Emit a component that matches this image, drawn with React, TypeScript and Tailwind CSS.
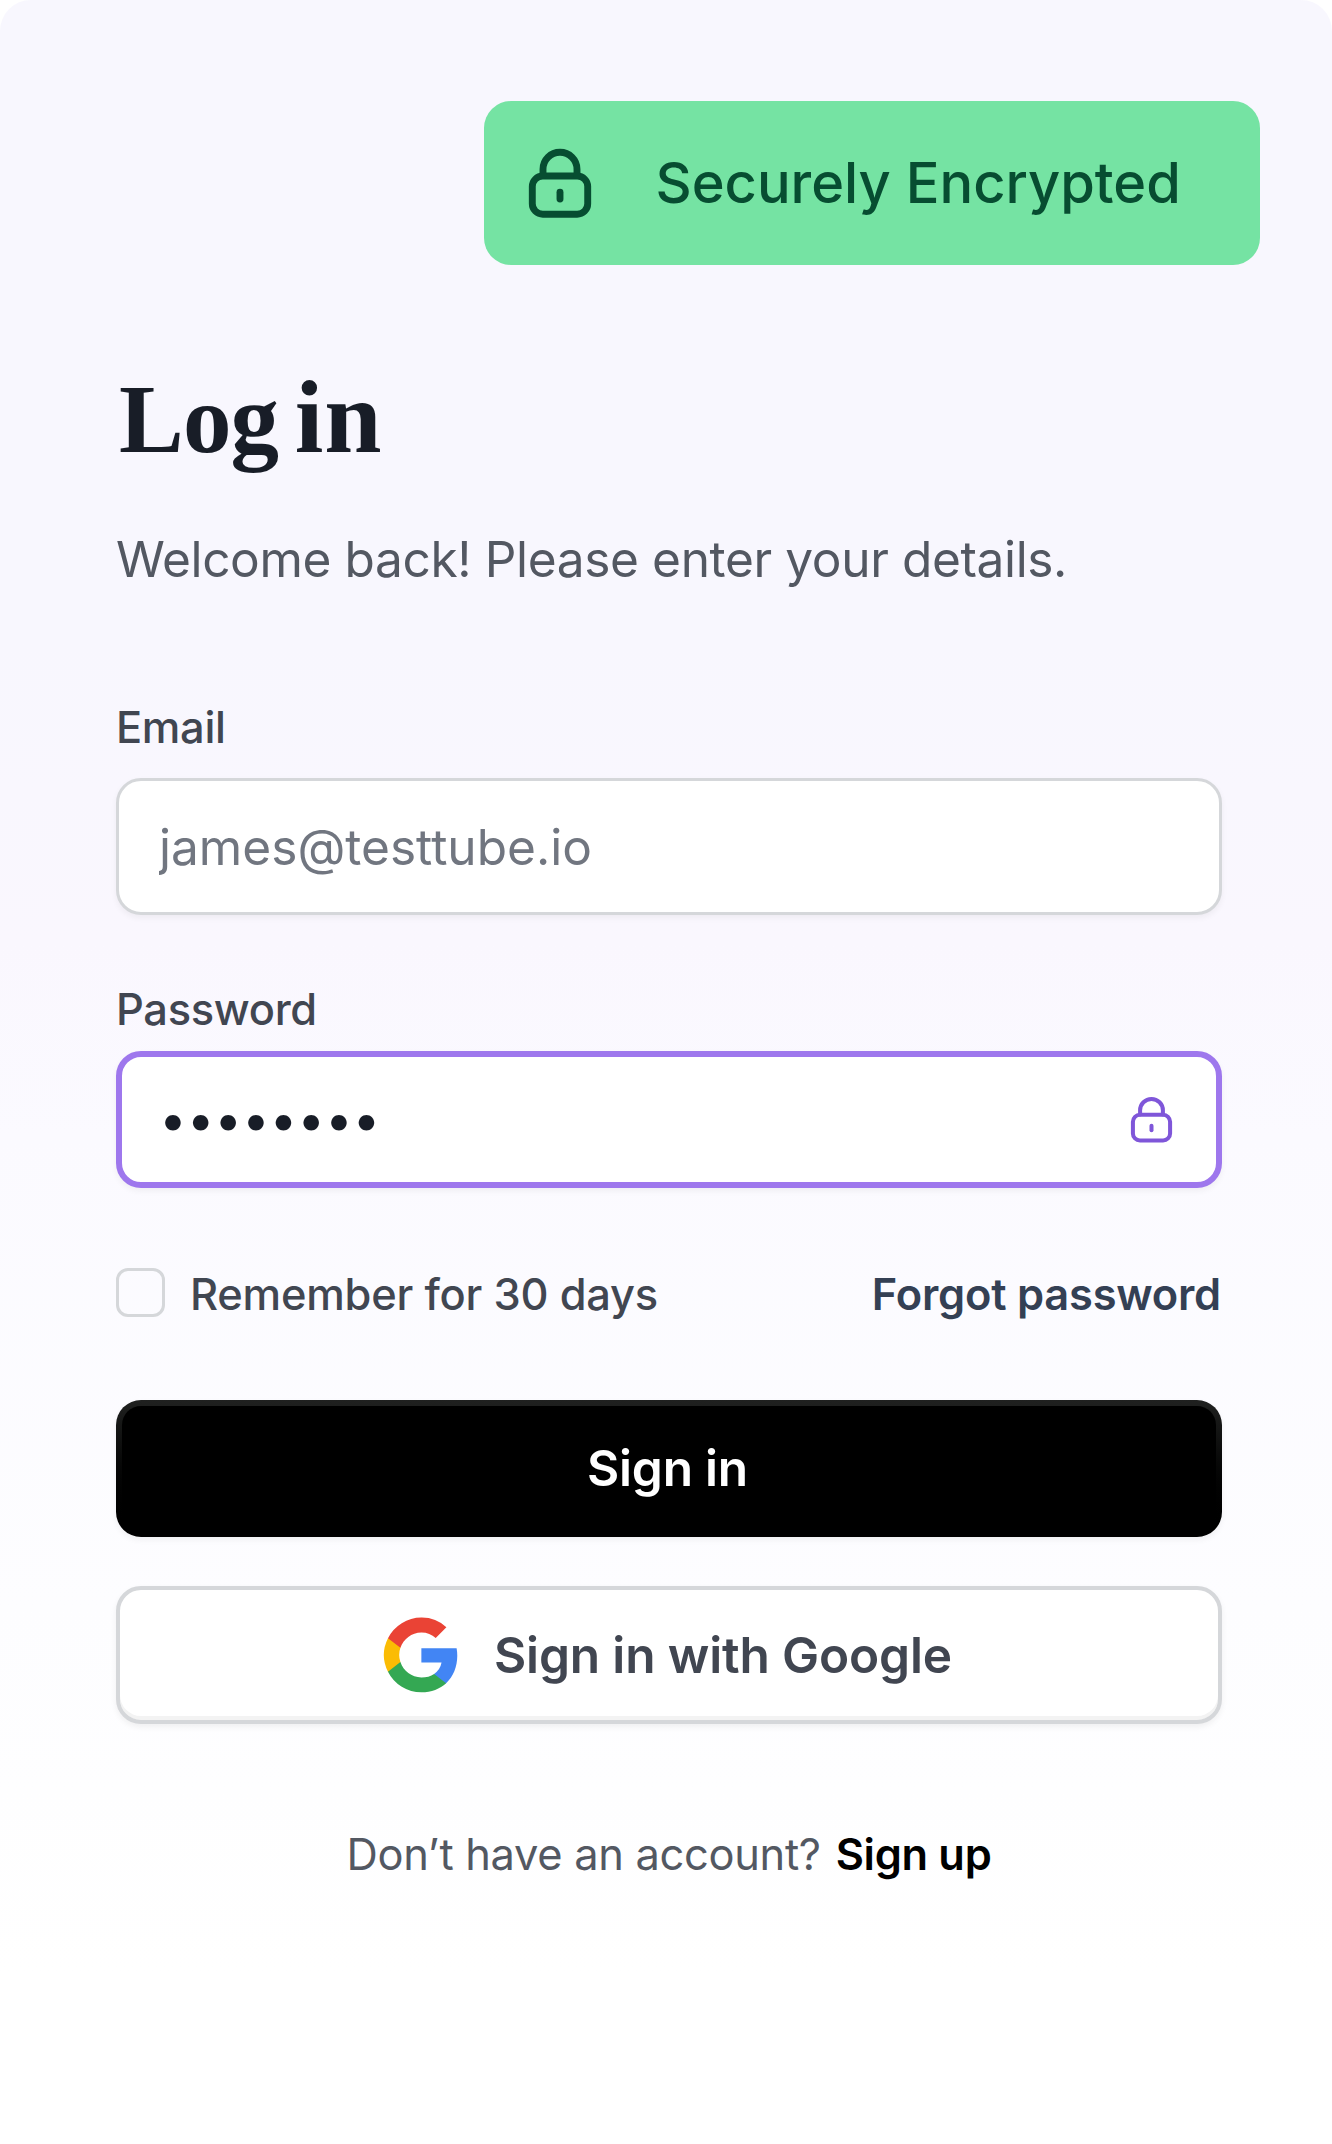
import { useState } from 'react';

interface LockIconProps {
  className?: string;
  strokeWidth: number;
}

function LockIcon({ className, strokeWidth }: LockIconProps) {
  return (
    <svg
      viewBox="0 0 70 76"
      fill="none"
      stroke="currentColor"
      strokeWidth={strokeWidth}
      strokeLinecap="round"
      strokeLinejoin="round"
      className={className}
      aria-hidden="true"
    >
      <rect x="7.3" y="31" width="55.4" height="38.2" rx="10.5" />
      <path d="M18 30.5V24.3a17 17 0 0 1 34 0V30.5" />
      <path d="M35 47.2V54" />
    </svg>
  );
}

function GoogleIcon({ className }: { className?: string }) {
  return (
    <svg viewBox="0 0 48 48" className={className} aria-hidden="true">
      <path
        fill="#4285F4"
        d="M47.53 24.55c0-1.63-.14-3.27-.43-4.88H24.24v9.25h13.09a11.2 11.2 0 0 1-4.84 7.35v6h7.81c4.59-4.22 7.23-10.45 7.23-17.72z"
      />
      <path
        fill="#34A853"
        d="M24.24 48.22c6.54 0 12.05-2.15 16.07-5.86l-7.81-6.05c-2.17 1.48-4.98 2.31-8.25 2.31-6.32 0-11.69-4.27-13.61-10H2.58v6.24a24.25 24.25 0 0 0 21.66 13.36z"
      />
      <path
        fill="#FBBC04"
        d="M10.63 28.62a14.5 14.5 0 0 1 0-9.28V13.1H2.58a24.27 24.27 0 0 0 0 21.76z"
      />
      <path
        fill="#EA4335"
        d="M24.24 9.34c3.46-.05 6.8 1.25 9.31 3.64l6.92-6.92A23.3 23.3 0 0 0 24.24-.26 24.25 24.25 0 0 0 2.58 13.1l8.05 6.24c1.92-5.75 7.29-10 13.61-10z"
      />
    </svg>
  );
}

export default function App() {
  const [email, setEmail] = useState('');
  const [password, setPassword] = useState('password');
  const [remember, setRemember] = useState(false);

  return (
    <div className="h-[2144px] w-[1332px] overflow-hidden bg-white font-['Inter',sans-serif] whitespace-nowrap">
      <div className="flex h-full flex-col rounded-t-[31px] bg-[linear-gradient(180deg,#f8f7fe_0%,#f8f7fe_30%,#faf7fe_44%,#fbfaff_53%,#fdfdff_75%,#ffffff_92%)] pt-[100.5px]">
        {/* Security badge */}
        <div className="mr-[72px] flex h-[164.5px] w-[776px] items-center self-end rounded-[27px] bg-[#75e3a3] pl-[40.5px] text-[#074d31]">
          <LockIcon className="h-[76px] w-[70px]" strokeWidth={6.9} />
          <span className="ml-[61px] text-[56px] leading-[80px] font-medium">Securely Encrypted</span>
        </div>

        <main className="mr-[110px] ml-[116px] flex flex-col">
          {/* Header */}
          <h1 className="mt-[95px] ml-[3px] font-['Liberation_Serif',serif] text-[97px] leading-[120px] font-bold tracking-[-0.8px] [word-spacing:-7px] text-[#181d27]">
            Log <span className="text-[103px] leading-none tracking-[1px]">in</span>
          </h1>
          <p className="mt-[42px] text-[49.6px] leading-[74px] tracking-[-0.38px] text-[#535862]">
            Welcome back! Please enter your details.
          </p>

          <form className="mt-[100px] flex flex-col" onSubmit={(e) => e.preventDefault()}>
            <label
              htmlFor="email"
              className="text-[43.4px] leading-[62px] font-medium tracking-[-0.3px] text-[#414651]"
            >
              Email
            </label>
            <input
              id="email"
              type="text"
              placeholder="james@testtube.io"
              value={email}
              onChange={(e) => setEmail(e.target.value)}
              className="mt-[20px] h-[137px] rounded-[25px] border-3 border-[#d5d7da] bg-white px-[40px] text-[49.6px] text-[#181d27] shadow-[0_3px_6px_rgba(10,13,18,0.05)] outline-none placeholder:text-[#717680]"
            />

            <label
              htmlFor="password"
              className="mt-[63px] text-[43.4px] leading-[62px] font-medium tracking-[-0.3px] text-[#414651]"
            >
              Password
            </label>
            <div className="mt-[11px] flex h-[137px] items-center rounded-[25px] border-6 border-[#9e77ed] bg-white pr-[41px] pl-[37px] shadow-[0_3px_6px_rgba(10,13,18,0.05)]">
              <input
                id="password"
                type="password"
                value={password}
                onChange={(e) => setPassword(e.target.value)}
                className="min-w-0 flex-1 bg-transparent text-[49.6px] tracking-[-0.25px] text-[#181d27] outline-none"
              />
              <LockIcon className="h-[51px] w-[47px] text-[#7f56d9]" strokeWidth={6} />
            </div>

            {/* Remember / forgot */}
            <div className="mt-[75px] flex h-[62px] items-center justify-between text-[43.4px] leading-[62px] tracking-[-0.2px]">
              <label className="flex items-center font-medium text-[#414651]">
                <input
                  type="checkbox"
                  checked={remember}
                  onChange={(e) => setRemember(e.target.checked)}
                  className="mb-[3px] size-[49px] appearance-none rounded-[12px] border-3 border-[#d5d7da] checked:bg-[#7f56d9]"
                />
                <span className="ml-[25px]">Remember for 30 days</span>
              </label>
              <a href="#" className="mr-px font-semibold text-[#344054]">
                Forgot password
              </a>
            </div>

            {/* Actions */}
            <button
              type="submit"
              className="mt-[75px] h-[137px] rounded-[25px] bg-linear-to-b from-[#202120] to-black p-[6px] shadow-[0_3px_6px_rgba(10,13,18,0.05)]"
            >
              <span className="flex h-full items-center justify-center rounded-[19px] bg-black pr-[3px] text-[49.6px] font-semibold tracking-[-0.2px] text-white">
                Sign in
              </span>
            </button>
            <button
              type="button"
              className="mt-[49px] flex h-[138px] items-center justify-center rounded-[25px] border-4 border-[#d5d7da] bg-white pr-[2px] text-[49.6px] font-semibold tracking-[-0.15px] text-[#414651] shadow-[0_3px_6px_rgba(10,13,18,0.06),inset_0_-4px_0_rgba(10,13,18,0.05)]"
            >
              <GoogleIcon className="size-[74px] overflow-visible" />
              <span className="ml-[36px]">Sign in with Google</span>
            </button>
          </form>

          {/* Footer */}
          <div className="mt-[99px] flex justify-center text-[43.4px] leading-[62px] tracking-[-0.3px] text-[#535862]">
            <span>Don’t have an account?</span>
            <a href="#" className="ml-[15px] font-semibold text-black">
              Sign up
            </a>
          </div>
        </main>
      </div>
    </div>
  );
}
